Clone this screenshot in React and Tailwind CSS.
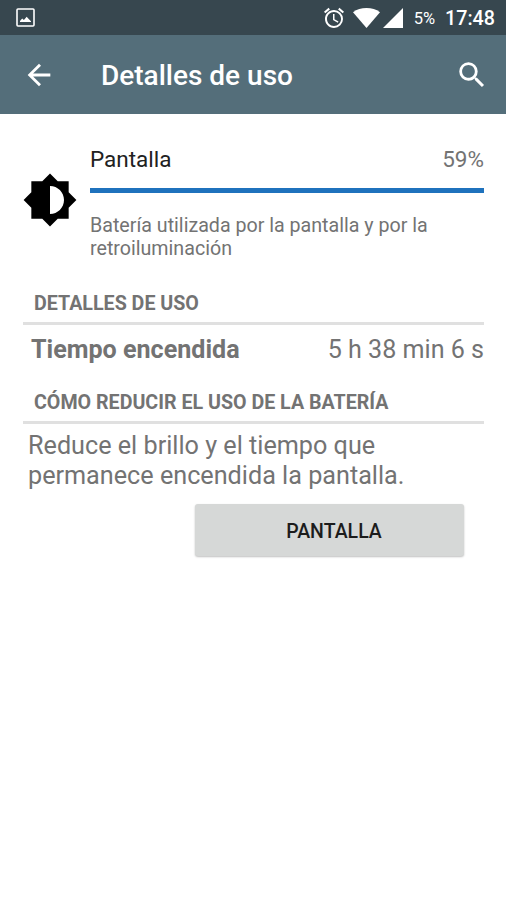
import React from "react";
import { MdAlarm, MdArrowBack, MdBrightness6, MdSearch } from "react-icons/md";

const ScreenshotIcon = () => (
  <svg width="19" height="19" viewBox="0 0 19 19" fill="none">
    <rect x="1" y="1" width="17" height="17" rx="1" stroke="white" strokeWidth="1.6" />
    <path d="M4 14v-1l2.2-2.6 1.7 1.7 2.8-3.3 2 2.2 2.3 2.2V14z" fill="white" />
  </svg>
);

const WifiIcon = () => (
  <svg width="27" height="20" viewBox="0 0 27 20" fill="white">
    <path d="M13.5 20L0 4.2C3.8 1.4 8.4 0 13.5 0S23.2 1.4 27 4.2z" />
  </svg>
);

const SignalIcon = () => (
  <svg width="20" height="20" viewBox="0 0 20 20" fill="white">
    <path d="M0 20L20 0v20z" />
  </svg>
);

const StatusBar = () => (
  <div className="flex h-[35px] items-center justify-between bg-[#37474f] pr-[11px] pl-[16px] text-white">
    <ScreenshotIcon />
    <div className="flex items-center">
      <MdAlarm size={24} className="mr-[7px]" />
      <WifiIcon />
      <span className="mr-[11px] ml-[3px]">
        <SignalIcon />
      </span>
      <span className="mr-[10px] pt-[2px] text-[16.5px] leading-[24px]">5%</span>
      <span className="pt-[2px] text-[19.7px] leading-[24px] font-medium">17:48</span>
    </div>
  </div>
);

const Toolbar = () => (
  <div className="flex h-[79px] items-center bg-[#546e7a] pr-[17px] pl-[22px] text-white">
    <MdArrowBack size={34} />
    <h1 className="ml-[45px] flex-1 pt-[2px] text-[28px] leading-[32px] font-medium">Detalles de uso</h1>
    <MdSearch size={34} />
  </div>
);

const SectionTitle = ({ children }) => (
  <h2 className="h-[43px] border-b-[3px] border-[#e0e0e0] pt-[10px] pl-[11px] text-[19.65px] leading-[24px] font-bold uppercase">
    {children}
  </h2>
);

const App = () => {
  return (
    <div className="h-[900px] w-[506px] overflow-hidden bg-white font-['Roboto',sans-serif] text-[#737373]">
      <StatusBar />
      <Toolbar />

      <main className="pt-[31px] pr-[22px] pl-[23px]">
        <div className="flex h-[137px]">
          <MdBrightness6 size={56} className="mt-[27px] mr-[12px] -ml-px shrink-0 text-black" />
          <div className="flex-1">
            <div className="flex justify-between text-[22.5px] leading-[28px]">
              <span className="text-[#212121]">Pantalla</span>
              <span>59%</span>
            </div>
            <div className="mt-[15px] h-[5px] bg-[#1f72bd]" />
            <p className="mt-[21px] text-[19.65px] leading-[23px]">
              Batería utilizada por la pantalla y por la
              <br />
              retroiluminación
            </p>
          </div>
        </div>

        <SectionTitle>Detalles de uso</SectionTitle>
        <div className="flex h-[56px] justify-between pt-[10px] pl-[8px] text-[25.1px] leading-[30px]">
          <span className="font-bold">Tiempo encendida</span>
          <span>5 h 38 min 6 s</span>
        </div>

        <SectionTitle>Cómo reducir el uso de la batería</SectionTitle>
        <p className="pt-[7px] pl-[5px] text-[25.2px] leading-[29.6px]">
          Reduce el brillo y el tiempo que
          <br />
          permanece encendida la pantalla.
        </p>

        <button className="mt-[14px] ml-[172px] block h-[52px] w-[269px] rounded-[3px] bg-[#d6d8d7] pt-[2px] pl-[9px] text-[19.5px] font-medium text-[#1c1c1c] uppercase shadow-[0_1px_2px_rgba(0,0,0,0.25)]">
          Pantalla
        </button>
      </main>
    </div>
  );
};

export default App;
